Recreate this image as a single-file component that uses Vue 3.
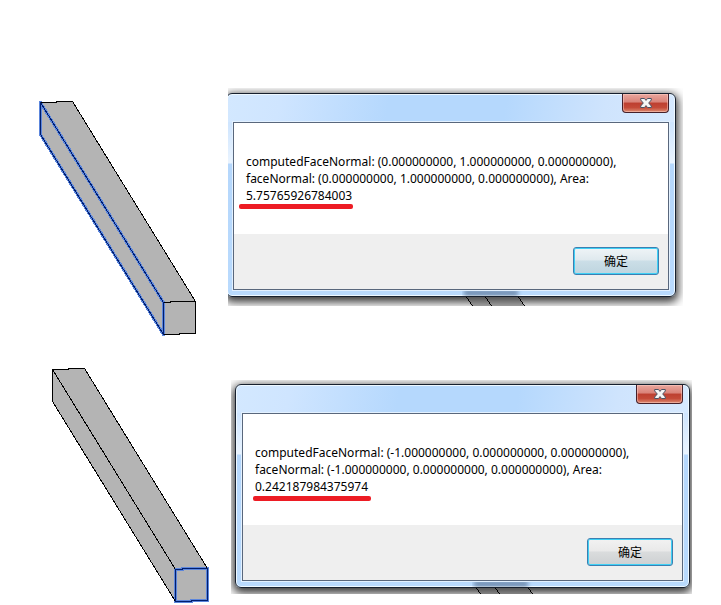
<script setup>
const cases = [
  {
    id: 'first',
    lines: [
      'computedFaceNormal: (0.000000000, 1.000000000, 0.000000000),',
      'faceNormal: (0.000000000, 1.000000000, 0.000000000), Area:',
    ],
    area: '5.75765926784003',
  },
  {
    id: 'second',
    lines: [
      'computedFaceNormal: (-1.000000000, 0.000000000, 0.000000000),',
      'faceNormal: (-1.000000000, 0.000000000, 0.000000000), Area:',
    ],
    area: '0.242187984375974',
  },
]
</script>

<template>
  <main class="page">
    <section v-for="item in cases" :key="item.id" class="case" :class="item.id">
      <svg class="beam" viewBox="0 0 162 240" width="162" height="240" role="img" aria-label="Beam" shape-rendering="crispEdges">
        <path class="solid" d="M2.5 4.5L18.5 4.5L18.5 3.5L34.5 3.5L157.5 203.5V235.5L141.5 235.5L141.5 236.5L125.5 236.5L2.5 36.5Z" />
        <path v-if="item.id === 'first'" class="glow" d="M2.5 4.5V36.5L125.5 236.5V204.5Z" />
        <path v-else class="glow" d="M125.5 204.5L132.5 204.5L132.5 203.5L157.5 203.5V235.5L141.5 235.5L141.5 236.5L125.5 236.5Z" />
        <path class="edge" d="M2.5 4.5L18.5 4.5L18.5 3.5L34.5 3.5L157.5 203.5V235.5L141.5 235.5L141.5 236.5L125.5 236.5L2.5 36.5ZL125.5 204.5V236.5M125.5 204.5L132.5 204.5L132.5 203.5L157.5 203.5" />
        <path v-if="item.id === 'first'" class="picked" d="M2.5 4.5V36.5L125.5 236.5V204.5Z" />
        <path v-else class="picked" d="M125.5 204.5L132.5 204.5L132.5 203.5L157.5 203.5V235.5L141.5 235.5L141.5 236.5L125.5 236.5Z" />
      </svg>

      <div class="capture">
        <div class="window" role="dialog" :aria-labelledby="item.id + '-text'">
          <header class="titlebar">
            <button class="close" type="button" aria-label="Close">
              <svg viewBox="0 0 12 10" width="12" height="10" aria-hidden="true">
                <path d="M.7 .5H4.5L6 2.4L7.500 .5H11.300V2L8.700 5L11.300 8V9.500H7.500L6 7.600L4.500 9.500H.7V8L3.300 5L.7 2Z" fill="#f6f6f6" stroke="#4b5364" stroke-width="1" />
              </svg>
            </button>
          </header>
          <div class="content">
            <p :id="item.id + '-text'" class="message">
              <span v-for="line in item.lines" :key="line" class="line">{{ line }}</span>
              <span class="area">{{ item.area }}</span>
            </p>
            <footer class="actions">
              <button class="ok" type="button">确定</button>
            </footer>
          </div>
        </div>
        <svg class="behind" viewBox="0 0 64 16" width="64" height="16" aria-hidden="true">
          <defs>
            <filter :id="item.id + '-soft'" x="-20%" y="-60%" width="140%" height="220%"><feGaussianBlur stdDeviation="2" /></filter>
            <clipPath :id="item.id + '-rim'"><rect y="1" width="64" height="5" /></clipPath>
          </defs>
          <g :clip-path="`url(#${item.id}-rim)`">
            <rect x="2" y="0" width="54" height="6" fill="#4a6386" opacity=".65" :filter="`url(#${item.id}-soft)`" />
          </g>
          <path d="M4 7H56L62 16H10Z" fill="#606060" opacity=".5" />
          <path d="M4.5 7L10.500 16M23.500 7L29.500 16M56.500 7L62.500 16" fill="none" stroke="#000" shape-rendering="crispEdges" />
        </svg>
      </div>
    </section>
  </main>
</template>

<style>
body {
  margin: 0;
  background: #fff;
}
</style>

<style scoped>
.page {
  display: flex;
  flex-direction: column;
  gap: 27px;
  padding-top: 88px;
  font: 12px/17px "Noto Sans", "Noto Sans CJK SC", sans-serif;
  color: #000;
}
.case {
  display: flex;
  align-items: flex-start;
}
.first {
  padding: 0 38px 0 38px;
}
.second {
  padding: 0 29px 0 50px;
}
.beam {
  flex: none;
  margin-top: 10px;
}
.second .beam {
  margin-top: 0;
}
.solid {
  fill: #b4b4b4;
}
.edge {
  fill: none;
  stroke: #000;
}
.glow {
  fill: none;
  stroke: #5c86dc;
  stroke-width: 3;
  stroke-linejoin: round;
}
.picked {
  fill: none;
  stroke: #001e6e;
  stroke-linejoin: round;
}
.capture {
  position: relative;
  display: flow-root;
  flex: 1;
  min-width: 0;
  overflow: hidden;
  margin-left: 28px;
}
.second .capture {
  margin: 15px 0 0 19px;
}
.window {
  box-sizing: border-box;
  margin: 5px 7px 9px -2px;
  padding: 0 6px 6px;
  border: 1px solid #17202e;
  border-radius: 6px;
  background:
    linear-gradient(100deg, #d3e8ff 0%, #cfe5ff 12%, #b5d8fd 36%, #b5d8fd 62%, #cfe4fd 84%, #d6e9ff 100%) 0 0 / 100% 28px no-repeat,
    linear-gradient(#cfe5fe 0, #cfe5fe 30px, #eaf4ff 69px, #b5d7fc 70px, #b9dafd 100%);
  box-shadow: inset 0 0 0 1px #eef8ff, 0 3px 10px 2px rgba(0, 0, 0, 0.8);
}
.second .window {
  margin: 4px 2px 6px 4px;
}
.titlebar {
  display: flex;
  justify-content: flex-end;
  align-items: flex-start;
  height: 28px;
}
.close {
  display: flex;
  align-items: center;
  justify-content: center;
  box-sizing: border-box;
  width: 47px;
  height: 19px;
  padding: 0;
  border: 1px solid #45202a;
  border-top: 0;
  border-radius: 0 0 4px 4px;
  background: linear-gradient(#eaa79e 0, #d98278 45%, #bd3f30 50%, #c44a38 75%, #dd8b72 100%);
  box-shadow: inset 0 0 0 1px rgba(255, 210, 200, 0.5);
}
.close svg {
  display: block;
}
.content {
  border: 1px solid #59677c;
  background: #fff;
  box-shadow: 0 0 0 1px #e3f1ff;
}
.message {
  box-sizing: border-box;
  height: 111px;
  margin: 0;
  padding: 30px 12px 0;
  white-space: nowrap;
}
.line {
  display: block;
}
.area {
  position: relative;
  display: inline-block;
}
.area::after {
  content: "";
  position: absolute;
  top: 17px;
  left: -7px;
  right: -1px;
  height: 5px;
  border-radius: 2px;
  background: #ed1c24;
}
.second .area::after {
  top: 18px;
  left: -2px;
  right: -3px;
}
.actions {
  display: flex;
  justify-content: flex-end;
  padding: 13px 9px 14px;
  background: #efefef;
}
.ok {
  box-sizing: border-box;
  width: 86px;
  height: 28px;
  padding: 0 0 2px;
  border: 1px solid #3c7fb1;
  border-radius: 3px;
  background: linear-gradient(#eff4f7 0, #dfe9ee 46%, #cbdee7 50%, #bed5df 100%);
  box-shadow: inset 0 0 0 1px #3fd0f5;
  font: 12px/17px "Noto Sans CJK SC", sans-serif;
  color: #000;
}
.second .ok {
  background: linear-gradient(#f2f2f2 0, #e9e9e9 46%, #dadcdd 50%, #cdd0d2 100%);
}
.behind {
  position: absolute;
  right: 157px;
  bottom: 0;
}
.second .behind {
  right: 156px;
  bottom: -3px;
}
</style>
